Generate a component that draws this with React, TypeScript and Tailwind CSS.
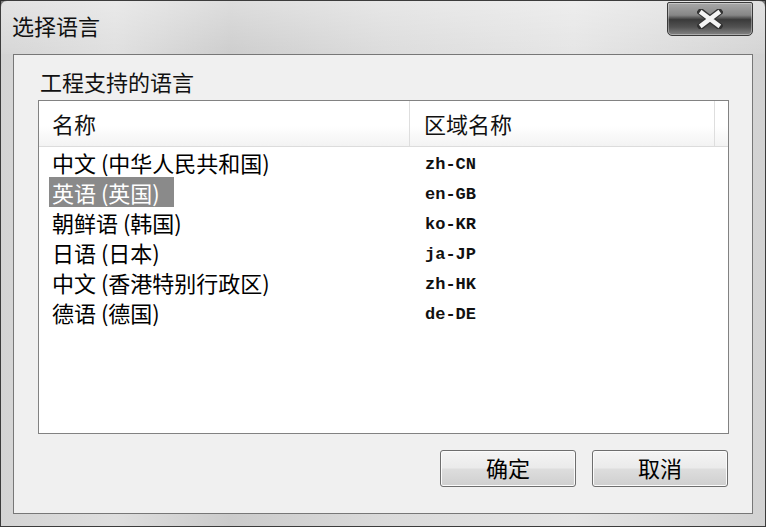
const rows = [
  { name: "中文 (中华人民共和国)", code: "zh-CN" },
  { name: "英语 (英国)", code: "en-GB", selected: true },
  { name: "朝鲜语 (韩国)", code: "ko-KR" },
  { name: "日语 (日本)", code: "ja-JP" },
  { name: "中文 (香港特别行政区)", code: "zh-HK" },
  { name: "德语 (德国)", code: "de-DE" },
];

const cjk = "font-['Noto_Sans_CJK_SC','Noto_Sans',sans-serif]";

function CloseButton() {
  return (
    <div className="mt-[1px] mr-[12px] w-[86px] h-[34px] rounded-b-[5px] rounded-t-[2px] border border-[#3a3a3a] bg-[linear-gradient(to_bottom,#a8a8a8_0%,#868686_38%,#3a3a3a_52%,#525252_75%,#858585_100%)] shadow-[inset_0_0_0_1px_rgba(255,255,255,0.35)] flex items-center justify-center">
      <svg width="26" height="20" viewBox="0 0 26 20">
        <path d="M4 3 L22 17 M22 3 L4 17" stroke="#333" strokeWidth="7" strokeLinecap="square" />
        <path d="M5 4 L21 16 M21 4 L5 16" stroke="#f4f4f4" strokeWidth="4.5" strokeLinecap="square" />
      </svg>
    </div>
  );
}

function Button({ label }: { label: string }) {
  return (
    <button className={`w-[136px] h-[37px] pb-[4px] rounded-[3px] border border-[#6e6e6e] bg-[linear-gradient(to_bottom,#f4f4f4_0%,#ebebeb_48%,#dddddd_52%,#cfcfcf_100%)] shadow-[inset_0_0_0_1px_#fbfbfb] text-[22px] leading-none text-black ${cjk}`}>
      {label}
    </button>
  );
}

export default function App() {
  return (
    <div className="w-[766px] h-[527px] bg-[#2e2e2e]">
      <div className="w-full h-full rounded-t-[7px] border border-[#3c3c3c] bg-[linear-gradient(to_right,#d4d4d4_0%,#dedede_15%,#cbcbcb_30%,#dadada_50%,#e4e4e4_75%,#d2d2d2_100%)] flex flex-col">
        <div className="h-[53px] flex items-start justify-between shrink-0 bg-[linear-gradient(to_bottom,rgba(255,255,255,0.35),rgba(255,255,255,0.05))]">
          <div className={`self-center pl-[11px] pb-[5px] text-[22px] leading-none text-[#111] ${cjk}`}>选择语言</div>
          <CloseButton />
        </div>
        <div className="flex-1 mx-[12px] mb-[12px] border border-[#777] bg-[#f0f0f0] flex flex-col pl-[24px] pr-[23px] pt-[13px] pb-[26px]">
          <div className={`pl-[2px] text-[22px] leading-[26px] text-[#111] ${cjk}`}>工程支持的语言</div>
          <div className="mt-[6px] h-[334px] border border-[#828282] bg-white flex flex-col">
            <div className={`h-[46px] shrink-0 flex border-b border-[#dcdcdc] bg-[linear-gradient(to_bottom,#ffffff_0%,#ffffff_55%,#f3f3f3_100%)] text-[22px] text-[#111] ${cjk}`}>
              <div className="w-[371px] border-r border-[#dedede] pl-[13px] flex items-center">名称</div>
              <div className="w-[305px] border-r border-[#dedede] pl-[14px] flex items-center">区域名称</div>
              <div className="flex-1" />
            </div>
            {rows.map((r) => (
              <div key={r.code} className="h-[30px] flex shrink-0">
                <div className="w-[371px] pl-[10px] flex">
                  <span
                    className={`pl-[3px] pr-[14px] h-[30px] flex items-center text-[22px] leading-none ${cjk} ${
                      r.selected ? "bg-[#8a8a8a] text-white" : "text-black"
                    }`}
                  >
                    {r.name}
                  </span>
                </div>
                <div className="pl-[15px] pt-[5px] flex items-center font-['Liberation_Mono',monospace] font-bold text-[17px] text-[#111]">
                  {r.code}
                </div>
              </div>
            ))}
          </div>
          <div className="mt-auto flex justify-end gap-[16px] pr-[1px]">
            <Button label="确定" />
            <Button label="取消" />
          </div>
        </div>
      </div>
    </div>
  );
}
